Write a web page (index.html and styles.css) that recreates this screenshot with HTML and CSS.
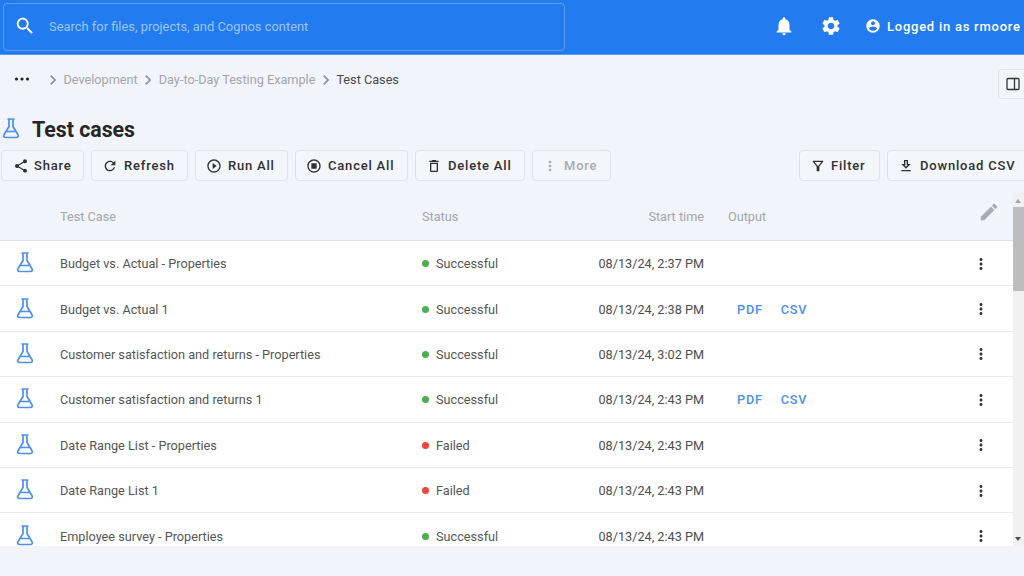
FILE: index.html
```html
<!DOCTYPE html>
<html lang="en">
<head>
<meta charset="utf-8">
<title>Test cases</title>
<link rel="stylesheet" href="styles.css">
</head>
<body>
<svg class="defs" width="0" height="0" aria-hidden="true">
  <symbol id="flask" viewBox="0 0 24 24"><path d="M8.5 3h7M10 3v7.5L5 18.8c-.9 1.3 0 2.7 1.5 2.7h11c1.5 0 2.4-1.4 1.5-2.7L14 10.5V3M7 15.5h10" fill="none" stroke="currentColor" stroke-width="1.7" stroke-linejoin="round"/></symbol>
  <symbol id="vert" viewBox="0 0 24 24"><path fill="currentColor" d="M12 8c1.1 0 2-.9 2-2s-.9-2-2-2-2 .9-2 2 .9 2 2 2zm0 2c-1.1 0-2 .9-2 2s.9 2 2 2 2-.9 2-2-.9-2-2-2zm0 6c-1.1 0-2 .9-2 2s.9 2 2 2 2-.9 2-2-.9-2-2-2z"/></symbol>
  <symbol id="chev" viewBox="0 0 24 24"><path fill="currentColor" d="M10 6L8.59 7.41 13.17 12l-4.58 4.59L10 18l6-6z"/></symbol>
</svg>

<header class="topbar">
  <div class="search">
    <svg class="search-icon" viewBox="0 0 24 24"><path fill="currentColor" d="M15.5 14h-.79l-.28-.27C15.41 12.59 16 11.11 16 9.5 16 5.91 13.09 3 9.5 3S3 5.91 3 9.5 5.91 16 9.5 16c1.61 0 3.09-.59 4.23-1.57l.27.28v.79l5 4.99L20.49 19l-4.99-5zm-6 0C7.01 14 5 11.99 5 9.5S7.01 5 9.5 5 14 7.01 14 9.5 11.99 14 9.5 14z"/></svg>
    <span class="search-text">Search for files, projects, and Cognos content</span>
  </div>
  <div class="top-actions">
    <svg class="top-icon bell" viewBox="0 0 24 24"><path fill="currentColor" d="M12 22c1.1 0 2-.9 2-2h-4c0 1.1.9 2 2 2zm6-6v-5c0-3.07-1.63-5.64-4.5-6.32V4c0-.83-.67-1.5-1.5-1.5s-1.5.67-1.5 1.5v.68C7.64 5.36 6 7.92 6 11v5l-2 2v1h16v-1l-2-2z"/></svg>
    <svg class="top-icon gear" viewBox="0 0 24 24"><path fill="currentColor" d="M19.14 12.94c.04-.3.06-.61.06-.94 0-.32-.02-.64-.07-.94l2.03-1.58c.18-.14.23-.41.12-.61l-1.92-3.32c-.12-.22-.37-.29-.59-.22l-2.39.96c-.5-.38-1.03-.7-1.62-.94l-.36-2.54c-.04-.24-.24-.41-.48-.41h-3.84c-.24 0-.43.17-.47.41l-.36 2.54c-.59.24-1.13.57-1.62.94l-2.39-.96c-.22-.08-.47 0-.59.22L2.74 8.87c-.12.21-.08.47.12.61l2.03 1.58c-.05.3-.09.63-.09.94s.02.64.07.94l-2.03 1.58c-.18.14-.23.41-.12.61l1.92 3.32c.12.22.37.29.59.22l2.39-.96c.5.38 1.03.7 1.62.94l.36 2.54c.05.24.24.41.48.41h3.84c.24 0 .44-.17.47-.41l.36-2.54c.59-.24 1.13-.56 1.62-.94l2.39.96c.22.08.47 0 .59-.22l1.92-3.32c.12-.22.07-.47-.12-.61l-2.01-1.58zM12 15.6c-1.98 0-3.6-1.62-3.6-3.6s1.62-3.6 3.6-3.6 3.6 1.62 3.6 3.6-1.62 3.6-3.6 3.6z"/></svg>
    <div class="user">
      <svg class="user-icon" viewBox="0 0 24 24"><path fill="currentColor" d="M12 2C6.48 2 2 6.48 2 12s4.48 10 10 10 10-4.48 10-10S17.52 2 12 2zm0 3c1.66 0 3 1.34 3 3s-1.34 3-3 3-3-1.34-3-3 1.34-3 3-3zm0 14.2c-2.5 0-4.71-1.28-6-3.22.03-1.99 4-3.08 6-3.08 1.99 0 5.97 1.09 6 3.08-1.29 1.94-3.5 3.22-6 3.22z"/></svg>
      <span>Logged in as rmoore</span>
    </div>
  </div>
</header>

<nav class="crumbs">
  <svg class="dots" viewBox="0 0 16 4"><circle cx="2.5" cy="2" r="1.6"/><circle cx="8" cy="2" r="1.6"/><circle cx="13.5" cy="2" r="1.6"/></svg>
  <svg class="chev first"><use href="#chev"/></svg>
  <span class="crumb">Development</span>
  <svg class="chev"><use href="#chev"/></svg>
  <span class="crumb">Day-to-Day Testing Example</span>
  <svg class="chev"><use href="#chev"/></svg>
  <span class="crumb current">Test Cases</span>
  <button class="panel-btn" type="button" aria-label="Toggle panel">
    <svg viewBox="0 0 14 14"><rect x="1" y="1.5" width="12" height="11" rx="1" fill="none" stroke="currentColor" stroke-width="1.3"/><path d="M8.5 1.5v11" stroke="currentColor" stroke-width="1.3"/></svg>
  </button>
</nav>

<div class="title-row">
  <svg class="title-flask"><use href="#flask"/></svg>
  <h1>Test cases</h1>
</div>

<div class="toolbar">
  <button class="btn btn-share" type="button"><svg viewBox="0 0 24 24"><path fill="currentColor" d="M18 16.08c-.76 0-1.44.3-1.96.77L8.91 12.7c.05-.23.09-.46.09-.7s-.04-.47-.09-.7l7.05-4.11c.54.5 1.25.81 2.04.81 1.66 0 3-1.34 3-3s-1.34-3-3-3-3 1.34-3 3c0 .24.04.47.09.7L8.04 9.81C7.5 9.31 6.79 9 6 9c-1.66 0-3 1.34-3 3s1.34 3 3 3c.79 0 1.5-.31 2.04-.81l7.12 4.16c-.05.21-.08.43-.08.65 0 1.61 1.31 2.92 2.92 2.92 1.61 0 2.92-1.31 2.92-2.92s-1.31-2.92-2.92-2.92z"/></svg>Share</button>
  <button class="btn btn-refresh" type="button"><svg viewBox="0 0 24 24"><path fill="currentColor" d="M17.65 6.35C16.2 4.9 14.21 4 12 4c-4.42 0-7.99 3.58-7.99 8s3.57 8 7.99 8c3.73 0 6.84-2.55 7.73-6h-2.08c-.82 2.33-3.04 4-5.65 4-3.31 0-6-2.69-6-6s2.69-6 6-6c1.66 0 3.14.69 4.22 1.78L13 11h7V4l-2.35 2.35z"/></svg>Refresh</button>
  <button class="btn btn-run" type="button"><svg viewBox="0 0 24 24"><path fill="currentColor" d="M10 16.5l6-4.5-6-4.5v9zM12 2C6.48 2 2 6.48 2 12s4.48 10 10 10 10-4.48 10-10S17.52 2 12 2zm0 18c-4.41 0-8-3.59-8-8s3.59-8 8-8 8 3.59 8 8-3.59 8-8 8z"/></svg>Run All</button>
  <button class="btn btn-cancel" type="button"><svg viewBox="0 0 24 24"><path fill="currentColor" d="M12 2C6.48 2 2 6.48 2 12s4.48 10 10 10 10-4.48 10-10S17.52 2 12 2zm0 18c-4.41 0-8-3.59-8-8s3.59-8 8-8 8 3.59 8 8-3.59 8-8 8zM8 8h8v8H8z"/></svg>Cancel All</button>
  <button class="btn btn-delete" type="button"><svg viewBox="0 0 24 24"><path fill="currentColor" d="M6 19c0 1.1.9 2 2 2h8c1.1 0 2-.9 2-2V7H6v12zM8 9h8v10H8V9zm7.5-5l-1-1h-5l-1 1H5v2h14V4z"/></svg>Delete All</button>
  <button class="btn btn-more" type="button" disabled><svg><use href="#vert"/></svg>More</button>
  <span class="toolbar-gap"></span>
  <button class="btn btn-filter" type="button"><svg viewBox="0 0 24 24"><path fill="currentColor" d="M7 6h10l-5.01 6.3L7 6zm-2.75-.39C6.27 8.2 10 13 10 13v6c0 .55.45 1 1 1h2c.55 0 1-.45 1-1v-6s3.72-4.8 5.74-7.39c.51-.66.04-1.61-.79-1.61H5.04c-.83 0-1.3.95-.79 1.61z"/></svg>Filter</button>
  <button class="btn btn-download" type="button"><svg viewBox="0 0 24 24"><path fill="currentColor" d="M19 9h-4V3H9v6H5l7 7 7-7zm-8 2V5h2v6h1.17L12 13.17 9.83 11H11zm-6 7h14v2H5z"/></svg>Download CSV</button>
</div>

<section class="table-wrap">
  <div class="table">
    <div class="row head">
      <span></span>
      <span>Test Case</span>
      <span>Status</span>
      <span class="time">Start time</span>
      <span class="output">Output</span>
      <svg class="edit" viewBox="0 0 24 24"><path fill="currentColor" d="M3 17.25V21h3.75L17.81 9.94l-3.75-3.75L3 17.25zM20.71 7.04c.39-.39.39-1.02 0-1.41l-2.34-2.34c-.39-.39-1.02-.39-1.41 0l-1.83 1.83 3.75 3.75 1.83-1.83z"/></svg>
    </div>
    <div class="row">
      <svg class="flask"><use href="#flask"/></svg><span>Budget vs. Actual - Properties</span>
      <span class="status ok">Successful</span><span class="time">08/13/24, 2:37 PM</span><span class="output"></span>
      <svg class="kebab"><use href="#vert"/></svg>
    </div>
    <div class="row">
      <svg class="flask"><use href="#flask"/></svg><span>Budget vs. Actual 1</span>
      <span class="status ok">Successful</span><span class="time">08/13/24, 2:38 PM</span><span class="output links"><a>PDF</a><a>CSV</a></span>
      <svg class="kebab"><use href="#vert"/></svg>
    </div>
    <div class="row">
      <svg class="flask"><use href="#flask"/></svg><span>Customer satisfaction and returns - Properties</span>
      <span class="status ok">Successful</span><span class="time">08/13/24, 3:02 PM</span><span class="output"></span>
      <svg class="kebab"><use href="#vert"/></svg>
    </div>
    <div class="row">
      <svg class="flask"><use href="#flask"/></svg><span>Customer satisfaction and returns 1</span>
      <span class="status ok">Successful</span><span class="time">08/13/24, 2:43 PM</span><span class="output links"><a>PDF</a><a>CSV</a></span>
      <svg class="kebab"><use href="#vert"/></svg>
    </div>
    <div class="row">
      <svg class="flask"><use href="#flask"/></svg><span>Date Range List - Properties</span>
      <span class="status bad">Failed</span><span class="time">08/13/24, 2:43 PM</span><span class="output"></span>
      <svg class="kebab"><use href="#vert"/></svg>
    </div>
    <div class="row">
      <svg class="flask"><use href="#flask"/></svg><span>Date Range List 1</span>
      <span class="status bad">Failed</span><span class="time">08/13/24, 2:43 PM</span><span class="output"></span>
      <svg class="kebab"><use href="#vert"/></svg>
    </div>
    <div class="row">
      <svg class="flask"><use href="#flask"/></svg><span>Employee survey - Properties</span>
      <span class="status ok">Successful</span><span class="time">08/13/24, 2:43 PM</span><span class="output"></span>
      <svg class="kebab"><use href="#vert"/></svg>
    </div>
  </div>
  <div class="scrollbar">
    <span class="arrow up"></span>
    <span class="thumb"></span>
    <span class="arrow down"></span>
  </div>
</section>
</body>
</html>
```

FILE: styles.css
```css
* { box-sizing: border-box; }
html, body { margin: 0; height: 100%; }
body {
  width: 1024px;
  height: 576px;
  overflow: hidden;
  background: #f1f4fa;
  color: #4d4d4d;
  font-family: Roboto, "Liberation Sans", sans-serif;
  font-size: 12.7px;
}
.defs { position: absolute; }

.topbar {
  height: 55px;
  padding: 3px 0 3px 3px;
  background: #227bef;
  border-bottom: 1px solid #5a9cf3;
  display: flex;
  align-items: stretch;
  color: #fff;
}
.search {
  width: 562px;
  border: 1px solid #5b9cf3;
  border-radius: 4px;
  display: flex;
  align-items: center;
  padding: 0 0 2px 10px;
}
.search-icon { width: 22px; height: 22px; margin-right: 13px; }
.search-text { color: #9cc5f8; font-size: 12.9px; }
.top-actions { flex: 1; display: flex; align-items: center; padding: 0 0 2px 208px; }
.top-icon { width: 22px; height: 22px; }
.bell { margin-right: 25px; }
.gear { margin-right: 23px; }
.user { display: flex; align-items: center; gap: 6px; font-size: 13px; font-weight: 500; letter-spacing: .75px; white-space: nowrap; }
.user-icon { width: 16px; height: 16px; }

.crumbs {
  height: 49px;
  display: flex;
  align-items: center;
  padding-left: 14px;
  font-size: 12.7px;
  color: #a3a6ab;
  position: relative;
}
.dots { width: 16px; height: 4px; fill: #222; margin-top: -1px; }
.chev { width: 20px; height: 20px; color: #8f9296; margin: 0 .5px; }
.chev.first { margin-left: 13px; }
.current { color: #4a4a4a; }
.panel-btn {
  position: absolute;
  left: 998px;
  top: 14px;
  width: 40px;
  height: 30px;
  padding: 0 0 0 7px;
  display: flex;
  align-items: center;
  background: #f3f6fb;
  border: 1px solid #e0e3e8;
  border-radius: 4px;
  color: #333;
}
.panel-btn svg { width: 14px; height: 14px; }

.title-row { height: 46px; display: flex; align-items: center; padding-top: 4px; }
.title-flask { width: 24px; height: 24px; margin: -3px 0 0 -1px; color: #4b8fef; flex: none; }
h1 { margin: 0 0 0 9px; font-size: 21.3px; font-weight: 700; color: #262626; }

.toolbar { display: flex; gap: 7px; height: 31px; padding-left: 1px; width: 1100px; }
.btn {
  height: 31px;
  flex: none;
  display: flex;
  align-items: center;
  padding: 0;
  background: #f3f6fb;
  border: 1px solid #e0e3e8;
  border-radius: 4px;
  color: #303030;
  font: 500 13px Roboto, "Liberation Sans", sans-serif;
  letter-spacing: .8px;
}
.btn svg { width: 16px; height: 16px; flex: none; }
.btn-share { width: 83px; padding-left: 11px; gap: 5px; }
.btn-refresh { width: 97px; padding-left: 10px; gap: 6px; }
.btn-run { width: 93px; padding-left: 10px; gap: 6px; }
.btn-cancel { width: 113px; padding-left: 10px; gap: 6px; }
.btn-delete { width: 110px; padding-left: 10px; gap: 6px; }
.btn-more { width: 79px; padding-left: 9px; gap: 6px; color: #a9abaf; }
.toolbar-gap { width: 174px; flex: none; }
.btn-filter { width: 81px; padding-left: 10px; gap: 5px; }
.btn-download { width: 150px; padding-left: 10px; gap: 6px; }

.table-wrap {
  margin-top: 12px;
  height: 353px;
  display: flex;
  overflow: hidden;
}
.table { width: 1013px; flex: none; }
.row {
  display: grid;
  grid-template-columns: 60px 362px 150px 132px 1fr 44px;
  align-items: center;
  height: 45.4px;
  padding-top: 1px;
  background: #fff;
  border-bottom: 1px solid #e9eaee;
  color: #555;
}
.head {
  height: 48px;
  padding: 0 0 1px;
  background: #f1f4fa;
  border-bottom: 1px solid #dfe3e8;
  color: #a3a6ab;
}
.time { text-align: right; color: #4d4d4d; }
.head .time { color: #a3a6ab; }
.output { padding-left: 24px; }
.links { display: flex; gap: 18px; padding-left: 33px; color: #4b8fef; font-weight: 500; letter-spacing: .8px; }
.flask { width: 24px; height: 24px; margin: -3px 0 0 13px; color: #4b8fef; }
.status { display: flex; align-items: center; gap: 7px; }
.status::before { content: ""; width: 7px; height: 7px; border-radius: 50%; }
.ok::before { background: #4caf50; }
.bad::before { background: #f44336; }
.kebab { width: 18px; height: 18px; color: #333; margin-left: 3px; }
.edit { width: 22px; height: 22px; color: #a9abaf; margin: -9px 0 0 9px; }

.scrollbar { width: 11px; flex: none; background: #f1f1f1; position: relative; }
.arrow { position: absolute; left: 2px; width: 0; height: 0; border-left: 3.5px solid transparent; border-right: 3.5px solid transparent; }
.up { top: 6px; border-bottom: 4px solid #a3a3a3; }
.down { bottom: 5px; border-top: 4px solid #505050; }
.thumb { display: block; width: 100%; height: 84px; margin-top: 14px; background: #bdbdbd; }
```
